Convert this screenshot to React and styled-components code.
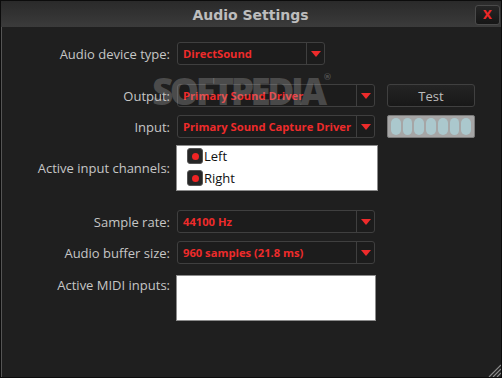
import React from "react";
import styled, { createGlobalStyle } from "styled-components";

const GlobalStyle = createGlobalStyle`
  html, body {
    margin: 0;
    padding: 0;
    background: #1e1e1e;
  }
  * {
    box-sizing: border-box;
  }
`;

function Arrow() {
  return (
    <svg width="10" height="6" viewBox="0 0 10 6">
      <path d="M0 0 L10 0 L5 6 Z" fill="#ee2b2b" />
    </svg>
  );
}

function Dropdown({ value, width }) {
  return (
    <Select $w={width}>
      <SelectText>{value}</SelectText>
      <ArrowBox>
        <Arrow />
      </ArrowBox>
    </Select>
  );
}

function Channel({ label }) {
  return (
    <ChannelRow>
      <Check>
        <Dot />
      </Check>
      <span>{label}</span>
    </ChannelRow>
  );
}

function App() {
  return (
    <>
      <GlobalStyle />
      <Window>
        <TitleBar>
          <span />
          <Title>Audio Settings</Title>
          <CloseButton>X</CloseButton>
        </TitleBar>
        <Body>
          <Row $top={15}>
            <Label>Audio device type:</Label>
            <Dropdown value="DirectSound" width={148} />
          </Row>
          <Row $top={19}>
            <Label>Output:</Label>
            <Dropdown value="Primary Sound Driver" width={198} />
            <TestButton>Test</TestButton>
          </Row>
          <Row $top={8}>
            <Label>Input:</Label>
            <Dropdown value="Primary Sound Capture Driver" width={198} />
            <Meter>
              {Array.from({ length: 7 }).map((_, i) => (
                <Pill key={i} />
              ))}
            </Meter>
          </Row>
          <Row $top={7}>
            <Label>Active input channels:</Label>
            <ListBox $h={46} $w={202}>
              <Channel label="Left" />
              <Channel label="Right" />
            </ListBox>
          </Row>
          <Row $top={19}>
            <Label>Sample rate:</Label>
            <Dropdown value="44100 Hz" width={198} />
          </Row>
          <Row $top={8}>
            <Label>Audio buffer size:</Label>
            <Dropdown value="960 samples (21.8 ms)" width={198} />
          </Row>
          <Row $top={11} $align="start">
            <Label $pad={1}>Active MIDI inputs:</Label>
            <ListBox $h={46} $w={200} />
          </Row>
        </Body>
        <Watermark>
          SOFTPEDIA<sup>®</sup>
        </Watermark>
        <Grip width="14" height="14" viewBox="0 0 14 14">
          <path d="M14 2 L2 14 M14 6 L6 14 M14 10 L10 14" stroke="#8a8a8a" strokeWidth="1.2" />
        </Grip>
      </Window>
    </>
  );
}

export default App;

const Window = styled.div`
  position: relative;
  width: 502px;
  height: 378px;
  display: flex;
  flex-direction: column;
  background: #1f1f1f;
  border: 1px solid #0c0c0c;
  overflow: hidden;
  font-family: "Open Sans", "DejaVu Sans", sans-serif;
`;

const TitleBar = styled.div`
  height: 26px;
  flex-shrink: 0;
  display: grid;
  grid-template-columns: 1fr auto 1fr;
  align-items: center;
  padding: 0 1px 0 0;
  background: linear-gradient(#2a2a2a, #3b3b3b);
`;

const Title = styled.div`
  font-family: "DejaVu Sans", sans-serif;
  font-weight: bold;
  font-size: 14px;
  color: #bdbdbd;
  padding-top: 1px;
`;

const CloseButton = styled.div`
  justify-self: end;
  width: 25px;
  height: 20px;
  margin-top: 1px;
  display: flex;
  align-items: center;
  justify-content: center;
  background: linear-gradient(#262626, #161616);
  border: 1px solid #4a4a4a;
  border-radius: 3px;
  color: #f02828;
  font-family: "DejaVu Sans", sans-serif;
  font-weight: bold;
  font-size: 12px;
`;

const Body = styled.div`
  flex: 1;
  display: flex;
  flex-direction: column;
  border-left: 1px solid #555;
`;

const Row = styled.div`
  display: flex;
  align-items: ${(p) => p.$align || "center"};
  margin-top: ${(p) => p.$top}px;
`;

const Label = styled.div`
  width: 168px;
  flex-shrink: 0;
  margin-right: 6px;
  text-align: right;
  font-size: 13px;
  color: #c6c6c6;
  padding-top: ${(p) => p.$pad || 0}px;
`;

const Select = styled.div`
  width: ${(p) => p.$w}px;
  height: 23px;
  margin-left: 1px;
  display: flex;
  align-items: stretch;
  background: #1c1c1c;
  border: 1px solid #3f3f3f;
  border-radius: 3px;
`;

const SelectText = styled.div`
  flex: 1;
  display: flex;
  align-items: center;
  padding-left: 5px;
  font-size: 11.2px;
  font-weight: bold;
  color: #ee2b2b;
  white-space: nowrap;
  overflow: hidden;
`;

const ArrowBox = styled.div`
  width: 18px;
  display: flex;
  align-items: center;
  justify-content: center;
  border-left: 1px solid #3f3f3f;
`;

const TestButton = styled.div`
  width: 88px;
  height: 23px;
  margin-left: 12px;
  display: flex;
  align-items: center;
  justify-content: center;
  background: linear-gradient(#242424, #181818);
  border: 1px solid #404040;
  border-radius: 3px;
  font-size: 13px;
  color: #bcbcbc;
`;

const Meter = styled.div`
  width: 88px;
  height: 23px;
  margin-left: 12px;
  display: flex;
  gap: 2px;
  padding: 2px 3px;
  background: #a6a6a6;
  border: 1px solid #7a7a7a;
  border-radius: 2px;
`;

const Pill = styled.div`
  flex: 1;
  background: #abc8cd;
  border-radius: 6px;
`;

const ListBox = styled.div`
  width: ${(p) => p.$w}px;
  height: ${(p) => p.$h}px;
  display: flex;
  flex-direction: column;
  padding: 2px 0 0 10px;
  gap: 6px;
  background: #ffffff;
  border: 1px solid #8c8c8c;
`;

const ChannelRow = styled.div`
  display: flex;
  align-items: center;
  gap: 1px;
  height: 16px;
  font-size: 13px;
  color: #111;
`;

const Check = styled.div`
  width: 16px;
  height: 16px;
  display: flex;
  align-items: center;
  justify-content: center;
  background: #262626;
  border: 1px solid #555;
  border-radius: 3px;
`;

const Dot = styled.div`
  width: 7px;
  height: 7px;
  border-radius: 50%;
  background: #f02424;
`;

const Watermark = styled.div`
  position: absolute;
  left: 151px;
  top: 71px;
  font-family: "Open Sans", sans-serif;
  font-weight: 800;
  font-size: 37px;
  line-height: 1;
  letter-spacing: -3.5px;
  color: rgba(190, 190, 190, 0.28);
  pointer-events: none;
  sup {
    font-size: 9px;
    letter-spacing: 0;
    vertical-align: top;
    margin-left: 0;
  }
`;

const Grip = styled.svg`
  position: absolute;
  right: 0;
  bottom: 0;
`;
